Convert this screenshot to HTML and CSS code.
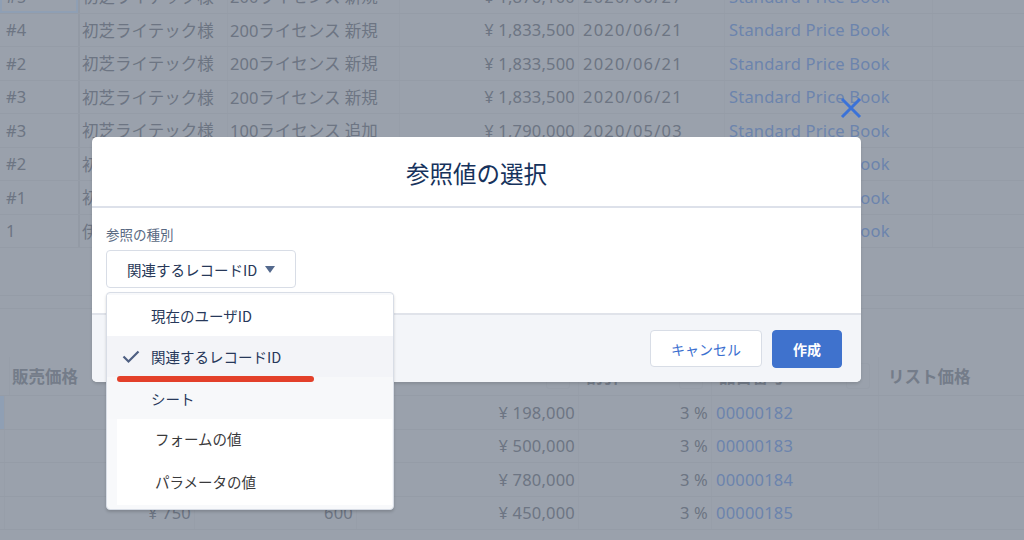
FILE: index.html
```html
<!DOCTYPE html>
<html lang="ja">
<head>
    <meta charset="UTF-8">
    <title>参照値の選択</title>
    <link rel="stylesheet" href="styles.css">
</head>
<body>
    <div class="sheet">
        <div class="grid top">
            <div class="row">
                <div class="cell num picked">#5</div><div class="cell">初芝ライテック様</div><div class="cell">200ライセンス 新規</div><div class="cell price">¥ 1,876,100</div><div class="cell date">2020/06/27</div><div class="cell link">Standard Price Book</div><div class="cell"></div>
            </div>
            <div class="row">
                <div class="cell num">#4</div><div class="cell">初芝ライテック様</div><div class="cell">200ライセンス 新規</div><div class="cell price">¥ 1,833,500</div><div class="cell date">2020/06/21</div><div class="cell link">Standard Price Book</div><div class="cell"></div>
            </div>
            <div class="row">
                <div class="cell num">#2</div><div class="cell">初芝ライテック様</div><div class="cell">200ライセンス 新規</div><div class="cell price">¥ 1,833,500</div><div class="cell date">2020/06/21</div><div class="cell link">Standard Price Book</div><div class="cell"></div>
            </div>
            <div class="row">
                <div class="cell num">#3</div><div class="cell">初芝ライテック様</div><div class="cell">200ライセンス 新規</div><div class="cell price">¥ 1,833,500</div><div class="cell date">2020/06/21</div><div class="cell link">Standard Price Book</div><div class="cell"></div>
            </div>
            <div class="row">
                <div class="cell num">#3</div><div class="cell">初芝ライテック様</div><div class="cell">100ライセンス 追加</div><div class="cell price">¥ 1,790,000</div><div class="cell date">2020/05/03</div><div class="cell link">Standard Price Book</div><div class="cell"></div>
            </div>
            <div class="row">
                <div class="cell num">#2</div><div class="cell">初芝ライテック様</div><div class="cell">100ライセンス 追加</div><div class="cell price">¥ 1,790,000</div><div class="cell date">2020/04/18</div><div class="cell link">Standard Price Book</div><div class="cell"></div>
            </div>
            <div class="row">
                <div class="cell num">#1</div><div class="cell">初芝ライテック様</div><div class="cell">100ライセンス 新規</div><div class="cell price">¥ 917,000</div><div class="cell date">2020/04/02</div><div class="cell link">Standard Price Book</div><div class="cell"></div>
            </div>
            <div class="row">
                <div class="cell num">1</div><div class="cell">伊藤商事様</div><div class="cell">50ライセンス 新規</div><div class="cell price">¥ 458,500</div><div class="cell date">2020/03/15</div><div class="cell link">Standard Price Book</div><div class="cell"></div>
            </div>
        </div>

        <div class="spacer one"></div>
        <div class="spacer two"></div>
        <div class="spacer three"></div>

        <div class="grid bottom">
            <div class="row head">
                <div class="cell"></div>
                <div class="cell">販売価格<span class="sort">⌄</span></div>
                <div class="cell">数量<span class="sort">⌄</span></div>
                <div class="cell">合計<span class="sort">⌄</span></div>
                <div class="cell">割引<span class="sort">⌄</span></div>
                <div class="cell">品目番号<span class="sort">⌄</span></div>
                <div class="cell">リスト価格</div>
            </div>
            <div class="row">
                <div class="cell picked"></div><div class="cell price">¥ 1,980</div><div class="cell price">100</div><div class="cell price">¥ 198,000</div><div class="cell price">3 %</div><div class="cell link">00000182</div><div class="cell"></div>
            </div>
            <div class="row">
                <div class="cell"></div><div class="cell price">¥ 1,000</div><div class="cell price">500</div><div class="cell price">¥ 500,000</div><div class="cell price">3 %</div><div class="cell link">00000183</div><div class="cell"></div>
            </div>
            <div class="row">
                <div class="cell"></div><div class="cell price">¥ 1,300</div><div class="cell price">600</div><div class="cell price">¥ 780,000</div><div class="cell price">3 %</div><div class="cell link">00000184</div><div class="cell"></div>
            </div>
            <div class="row">
                <div class="cell"></div><div class="cell price">¥ 750</div><div class="cell price">600</div><div class="cell price">¥ 450,000</div><div class="cell price">3 %</div><div class="cell link">00000185</div><div class="cell"></div>
            </div>
        </div>
    </div>

    <!-- modal -->
    <button class="close" title="閉じる">
        <svg width="24" height="24" viewBox="0 0 24 24"><path d="M3 3 L21 21 M21 3 L3 21" stroke="#3b72d8" stroke-width="3" fill="none"/></svg>
    </button>
    <div class="modal">
        <div class="modal-head">参照値の選択</div>
        <div class="modal-body">
            <div class="label">参照の種別</div>
            <button class="select">関連するレコードID <span class="caret"></span></button>
        </div>
        <div class="modal-foot">
            <button class="btn">キャンセル</button>
            <button class="btn brand">作成</button>
        </div>
    </div>

    <div class="menu">
        <div class="item">現在のユーザID</div>
        <div class="item active">
            <svg class="check" width="18" height="14" viewBox="0 0 18 14"><path d="M1.5 6.5 L6.5 11.5 L16.5 1.5" stroke="#4e5f82" stroke-width="2.2" fill="none"/></svg>
            関連するレコードID
        </div>
        <div class="item sheet-item">シート</div>
        <div class="item plain">フォームの値</div>
        <div class="item plain last">パラメータの値</div>
        <div class="mark"></div>
    </div>
</body>
</html>
```

FILE: styles.css
```css
body {
    margin: 0;
    background-color: #9aa1ac;
    font-family: "Noto Sans", "Noto Sans CJK JP", sans-serif;
    color: #6d7583;
    overflow: hidden;
    height: 540px;
}
.sheet {
    margin-top: -20px;
}
.grid .row {
    display: grid;
    height: 33.5px;
    border-bottom: 1px solid #959ca7;
    box-sizing: border-box;
    font-size: 16.5px;
}
.grid.top .row {
    grid-template-columns: 80px 148px 172px 179px 146px 208px 1fr;
}
.grid.bottom .row {
    grid-template-columns: 5px 190px 162px 222px 133px 167px 1fr;
}
.cell {
    display: flex;
    align-items: center;
    white-space: nowrap;
    overflow: hidden;
    border-right: 1px solid #979ea9;
    padding: 0 2px;
}
.cell:last-child {
    border-right: none;
}
.num {
    padding-left: 6px;
    border-right: 2px solid #939aa5;
}
.picked {
    box-shadow: inset 0 0 0 2px #8f9fb4;
}
.price {
    justify-content: flex-end;
    padding-right: 3px;
    letter-spacing: 0.2px;
}
.date {
    padding-left: 4px;
    letter-spacing: 1.2px;
}
.link {
    color: #6c84ad;
    padding-left: 4px;
    letter-spacing: 0.2px;
}
.spacer.one {
    height: 47px;
    border-bottom: 1px solid #959ca7;
}
.spacer.two {
    height: 12px;
    border-bottom: 1px solid #959ca7;
}
.spacer.three {
    height: 43px;
}
.grid.bottom .row.head {
    height: 44px;
    font-weight: bold;
    color: #747c89;
    padding-top: 5px;
}
.head .cell {
    padding-left: 7px;
    justify-content: space-between;
}
.head .cell:last-child {
    padding-left: 9px;
}
.sort {
    font-weight: normal;
    font-size: 14px;
    width: 22px;
    height: 24px;
    border: 1px solid #979ea9;
    border-radius: 3px;
    text-align: center;
    margin-right: 6px;
    line-height: 18px;
}

/* modal */
.close {
    position: absolute;
    left: 839px;
    top: 96px;
    padding: 0;
    border: none;
    background: none;
    width: 24px;
    height: 24px;
}
.modal {
    position: absolute;
    left: 92px;
    top: 137px;
    width: 769px;
    height: 245px;
    background-color: #fff;
    border-radius: 5px;
    display: flex;
    flex-direction: column;
    overflow: hidden;
    box-shadow: 0 2px 3px rgba(0, 0, 0, 0.12);
}
.modal-head {
    display: flex;
    align-items: center;
    justify-content: center;
    border-bottom: 2px solid #dde1ea;
    font-family: "Noto Sans CJK JP", sans-serif;
    font-size: 23.5px;
    color: #16325c;
    padding-top: 2px;
    box-sizing: border-box;
    height: 71px;
}
.modal-body {
    flex: 1;
    padding: 16px 14px 0 14px;
}
.label {
    font-family: "Noto Sans CJK JP", sans-serif;
    font-size: 13.5px;
    line-height: 20px;
    color: #596982;
    margin-bottom: 6px;
}
.select {
    width: 190px;
    height: 38px;
    border: 1px solid #d8dde6;
    border-radius: 4px;
    background-color: #fff;
    font-family: "Noto Sans CJK JP", sans-serif;
    font-size: 14.5px;
    color: #273858;
    text-align: left;
    padding: 0 0 0 20px;
    display: flex;
    align-items: center;
}
.caret {
    display: inline-block;
    width: 0;
    height: 0;
    border-left: 5px solid transparent;
    border-right: 5px solid transparent;
    border-top: 7px solid #54698d;
    margin-left: 8px;
}
.modal-foot {
    height: 69px;
    border-top: 2px solid #e0e3ea;
    background-color: #f3f5f9;
    display: flex;
    align-items: center;
    justify-content: flex-end;
    gap: 10px;
    padding-right: 19px;
    box-sizing: border-box;
}
.btn {
    height: 37px;
    width: 112px;
    border: 1px solid #d8dde6;
    border-radius: 4px;
    background-color: #fff;
    color: #3b6fcf;
    font-family: "Noto Sans CJK JP", sans-serif;
    font-size: 14px;
}
.btn.brand {
    width: 70px;
    height: 38px;
    background-color: #3f72cd;
    border-color: #3f72cd;
    color: #fff;
    font-weight: bold;
}

/* dropdown */
.menu {
    position: absolute;
    left: 106px;
    top: 292px;
    width: 288px;
    height: 218px;
    box-sizing: border-box;
    border: 1px solid #d8dde6;
    border-radius: 4px;
    background-color: #f8f9fb;
    padding-top: 2px;
    box-shadow: 0 2px 3px rgba(0, 0, 0, 0.16);
    overflow: hidden;
    font-family: "Noto Sans CJK JP", sans-serif;
    font-size: 14.5px;
}
.item {
    height: 41px;
    display: flex;
    align-items: center;
    padding-left: 44px;
    color: #27385a;
    background-color: #fff;
    position: relative;
}
.item.active {
    background-color: #f3f4f8;
}
.item.sheet-item {
    background-color: #f7f8fa;
    height: 42px;
}
.item.plain {
    margin-left: 10px;
    margin-right: 1px;
    padding-left: 38px;
    color: #3a3a3c;
    height: 38px;
}
.item.last {
    height: 48px;
}
.check {
    position: absolute;
    left: 15px;
    top: 14px;
}
.mark {
    position: absolute;
    left: 10px;
    top: 83px;
    width: 197px;
    height: 6px;
    border-radius: 3px;
    background-color: #e3402a;
}
```
